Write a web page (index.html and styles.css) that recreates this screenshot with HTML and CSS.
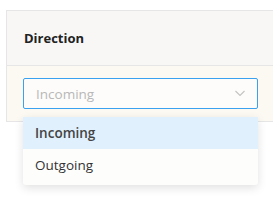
FILE: index.html
```html
<!DOCTYPE html>
<html lang="en">
<head>
  <meta charset="UTF-8">
  <title>Direction</title>
  <link rel="stylesheet" href="styles.css">
</head>
<body>

  <div class="card">
    <div class="card-head">Direction</div>
    <div class="card-body">
      <div class="select">
        <span class="placeholder">Incoming</span>
        <svg class="chevron" width="10" height="7" viewBox="0 0 10 7">
          <path d="M0.5 1 L5 5.5 L9.5 1" fill="none" stroke="#c2c2c2" stroke-width="1.1"/>
        </svg>
      </div>
    </div>

    <!-- open dropdown -->
    <ul class="menu">
      <li class="active">Incoming</li>
      <li>Outgoing</li>
    </ul>
  </div>

</body>
</html>
```

FILE: styles.css
```css
* {
  box-sizing: border-box;
  font-family: "Open Sans", "Noto Sans", sans-serif;
}

html {
  overflow: hidden;
}

body {
  margin: 0;
  padding: 10px 0 0 6px;
  min-height: 209px;
  background-color: #ffffff;
  color: #333;
}

.card {
  position: relative;
  width: 280px;
  border: 1px solid #e6e6e6;
}

.card-head {
  height: 55px;
  padding: 0 17px;
  display: flex;
  align-items: center;
  background-color: #f8f7f6;
  border-bottom: 1px solid #e6e6e6;
  font-size: 13px;
  font-weight: bold;
  color: #222;
}

.card-body {
  height: 55px;
  padding: 12px 0 0 16px;
  background-color: #fcf9f3;
}

.select {
  width: 235px;
  height: 31px;
  padding: 0 12px;
  display: flex;
  align-items: center;
  justify-content: space-between;
  background-color: #fdfcfa;
  border: 1px solid #3aa0f0;
  border-radius: 2px;
}

.placeholder {
  font-size: 13.5px;
  color: #b8b8b8;
}

.menu {
  position: absolute;
  left: 16px;
  top: 106px;
  z-index: 2;
  width: 235px;
  margin: 0;
  padding: 0 0 4px;
  list-style: none;
  background-color: #fdfdfc;
  border-radius: 3px;
  box-shadow: 0 3px 10px rgba(0,0,0,0.12);
}

.menu li {
  height: 32px;
  padding: 0 12px;
  display: flex;
  align-items: center;
  font-size: 13.5px;
  color: #333;
}

.menu li.active {
  background-color: #e1f0fd;
  font-weight: 600;
  color: #444;
}
```
